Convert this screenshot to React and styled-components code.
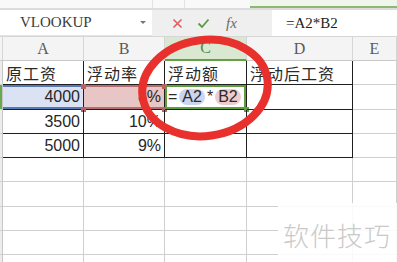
import React from "react";
import styled, { createGlobalStyle } from "styled-components";

const Global = createGlobalStyle`
  html, body { margin: 0; padding: 0; background: #fff; }
  body { width: 397px; height: 262px; overflow: hidden; font-family: "Liberation Sans", "Noto Sans CJK SC", sans-serif; }
`;

const Page = styled.div`
  position: relative;
  width: 397px;
  height: 262px;
  overflow: hidden;
  background: #fff;
`;

const TopStrip = styled.div`
  display: flex;
  height: 8px;
  background: #f9f9f9;
  border-bottom: 2px solid #dcdcdc;
`;

const StripSeg = styled.div`
  width: ${(p) => p.$w}px;
  border-right: 1px solid #e2e2e2;
  box-sizing: border-box;
`;

const StripGap = styled.div`
  width: 65px;
`;

const GreenTab = styled.div`
  flex: 1;
  background: #f1f6ec;
  border-bottom: 2px solid #8db873;
  height: 6px;
`;

const FormulaBar = styled.div`
  display: flex;
  height: 27px;
  background: #efefef;
  border-bottom: 1px solid #d6d6d6;
  box-sizing: border-box;
`;

const NameBox = styled.div`
  width: 152px;
  background: #fff;
  display: flex;
  align-items: center;
  justify-content: space-between;
  padding: 0 6px 0 20px;
  box-sizing: border-box;
  font-family: "Liberation Serif", serif;
  font-size: 15px;
  color: #3a3a3a;
  border-bottom: 1px solid #e4e4e4;
`;

const Caret = styled.span`
  width: 0;
  height: 0;
  border-left: 3px solid transparent;
  border-right: 3px solid transparent;
  border-top: 3px solid #777;
`;

const Actions = styled.div`
  width: 120px;
  display: flex;
  align-items: center;
  padding-left: 20px;
  gap: 14px;
  box-sizing: border-box;
`;

const Fx = styled.span`
  font-family: "Liberation Serif", serif;
  font-style: italic;
  font-size: 15px;
  color: #6a6a6a;
  margin-left: 2px;
`;

const FormulaInput = styled.div`
  flex: 1;
  background: #fff;
  display: flex;
  align-items: center;
  padding-left: 14px;
  font-family: "Liberation Serif", serif;
  font-size: 15px;
  color: #222;
`;

const Sheet = styled.div`
  display: grid;
  grid-template-columns: 3px 81px 81px 82px 106px 1fr;
`;

const ColHead = styled.div`
  height: 24px;
  box-sizing: border-box;
  display: flex;
  align-items: center;
  justify-content: center;
  font-family: "Liberation Serif", serif;
  font-size: 16px;
  color: ${(p) => (p.$active ? "#4f8d33" : "#5a5a5a")};
  background: ${(p) => (p.$active ? "#dbe8d1" : "#f4f4f4")};
  border-right: 1px solid #d6d6d6;
  border-bottom: ${(p) => (p.$active ? "2px solid #66a046" : "1px solid #c9c9c9")};
`;

const RowHead = styled.div`
  height: ${(p) => p.$h}px;
  box-sizing: border-box;
  background: ${(p) => (p.$active ? "#dbe8d1" : "#ececec")};
  border-right: 1px solid #c6c6c6;
  border-bottom: 1px solid #d0d0d0;
  box-shadow: ${(p) => (p.$active ? "inset 2px 0 0 #6aa84f" : "none")};
`;

const tones = {
  none: { bg: "transparent", line: "transparent" },
  blue: { bg: "#dae2f3", line: "#5a78b4" },
  pink: { bg: "#e8c6c6", line: "#b56d6d" },
};

const Cell = styled.div`
  position: relative;
  height: ${(p) => p.$h}px;
  box-sizing: border-box;
  display: flex;
  align-items: center;
  justify-content: ${(p) => (p.$right ? "flex-end" : "flex-start")};
  padding: ${(p) => (p.$right ? "0 3px 0 0" : "0 0 0 3px")};
  font-family: "Liberation Sans", "Noto Sans CJK SC", sans-serif;
  font-size: 16px;
  color: #262626;
  white-space: nowrap;
  overflow: visible;
  border-right: 1px solid ${(p) => (p.$table ? "#1f1f1f" : "#cfcfcf")};
  border-bottom: 1px solid ${(p) => (p.$table ? "#1f1f1f" : "#cfcfcf")};
  background: ${(p) => tones[p.$tone || "none"].bg};
  box-shadow: ${(p) =>
    p.$tone && p.$tone !== "none"
      ? `inset 0 2px 0 ${tones[p.$tone].line}, inset 0 -2px 0 ${tones[p.$tone].line}`
      : p.$editing
      ? "inset 0 0 0 2px #5f9d40"
      : "none"};
`;

const CjkText = styled.span`
  font-family: "Noto Sans CJK SC", sans-serif;
  font-size: 16px;
  color: #2a2a2a;
  letter-spacing: 1px;
`;

const Handle = styled.span`
  position: absolute;
  width: 5px;
  height: 5px;
  background: ${(p) => p.$c};
  ${(p) => (p.$side === "l" ? "left: -3px;" : "right: -3px;")}
  ${(p) => (p.$edge === "t" ? "top: -1px;" : "bottom: -3px;")}
`;

const Pill = styled.span`
  background: ${(p) => p.$bg};
  border-radius: 8px;
  padding: 0 3px;
  line-height: 16px;
  margin: 0 2px;
`;

const FormulaText = styled.span`
  font-family: "Liberation Sans", sans-serif;
  font-size: 16px;
  color: #2a2a2a;
  display: flex;
  align-items: center;
`;

const Ring = styled.svg`
  position: absolute;
  left: 134px;
  top: 33px;
  pointer-events: none;
`;

const Watermark = styled.div`
  position: absolute;
  left: 278px;
  top: 203px;
  right: 0;
  bottom: 0;
  background: rgba(255, 255, 255, 0.88);
  display: flex;
  align-items: flex-start;
  padding: 13px 0 0 5px;
  box-sizing: border-box;
  font-family: "Noto Sans CJK SC", sans-serif;
  font-size: 26px;
  font-weight: 300;
  color: #c9c9c9;
  letter-spacing: 1px;
`;

const rowHeights = [24, 25, 24, 24, 24, 25, 24, 24, 24];

const data = [
  ["原工资", "浮动率", "浮动额", "浮动后工资"],
  ["4000", "8%", null, ""],
  ["3500", "10%", "", ""],
  ["5000", "9%", "", ""],
];

function CrossIcon() {
  return (
    <svg width="11" height="11" viewBox="0 0 11 11">
      <path d="M1.5 1.5 L9.5 9.5 M9.5 1.5 L1.5 9.5" stroke="#df5c5c" strokeWidth="1.6" fill="none" />
    </svg>
  );
}

function CheckIcon() {
  return (
    <svg width="13" height="11" viewBox="0 0 13 11">
      <path d="M1.5 5.5 L5 9 L11.5 1.5" stroke="#5c9a48" strokeWidth="1.8" fill="none" />
    </svg>
  );
}

export default function App() {
  const rows = rowHeights.map((h, r) => {
    const isTable = r < 4;
    const active = r === 1;
    const vals = data[r] || ["", "", "", ""];
    return (
      <React.Fragment key={r}>
        <RowHead $h={h} $active={active} />
        {[0, 1, 2, 3, 4].map((c) => {
          const table = isTable && c < 4;
          const v = c < 4 ? vals[c] : "";
          if (active && c === 0) {
            return (
              <Cell key={c} $h={h} $table={table} $right $tone="blue">
                {v}
              </Cell>
            );
          }
          if (active && c === 1) {
            return (
              <Cell key={c} $h={h} $table={table} $right $tone="pink">
                {v}
                <Handle $c="#b36464" $side="l" $edge="t" />
                <Handle $c="#b36464" $side="l" $edge="b" />
                <Handle $c="#b36464" $side="r" $edge="t" />
                <Handle $c="#b36464" $side="r" $edge="b" />
              </Cell>
            );
          }
          if (active && c === 2) {
            return (
              <Cell key={c} $h={h} $table={table} $editing>
                <FormulaText>
                  =<Pill $bg="#cbd5ee">A2</Pill>*<Pill $bg="#eecccc">B2</Pill>
                </FormulaText>
                <Handle $c="#5f9d40" $side="r" $edge="b" />
              </Cell>
            );
          }
          const isText = r === 0;
          return (
            <Cell key={c} $h={h} $table={table} $right={!isText}>
              {isText ? <CjkText>{v}</CjkText> : v}
            </Cell>
          );
        })}
      </React.Fragment>
    );
  });

  return (
    <Page>
      <Global />
      <TopStrip>
        <StripSeg $w={153} />
        <StripSeg $w={32} />
        <StripGap />
        <GreenTab />
      </TopStrip>
      <FormulaBar>
        <NameBox>
          VLOOKUP
          <Caret />
        </NameBox>
        <Actions>
          <CrossIcon />
          <CheckIcon />
          <Fx>fx</Fx>
        </Actions>
        <FormulaInput>=A2*B2</FormulaInput>
      </FormulaBar>
      <Sheet>
        <ColHead />
        <ColHead>A</ColHead>
        <ColHead>B</ColHead>
        <ColHead $active>C</ColHead>
        <ColHead>D</ColHead>
        <ColHead>E</ColHead>
        {rows}
      </Sheet>
      <Ring width="142" height="110" viewBox="0 0 142 110">
        <ellipse cx="71" cy="55" rx="63" ry="48" fill="none" stroke="#e8302d" strokeWidth="8" transform="rotate(-8 71 55)" />
      </Ring>
      <Watermark>软件技巧</Watermark>
    </Page>
  );
}
